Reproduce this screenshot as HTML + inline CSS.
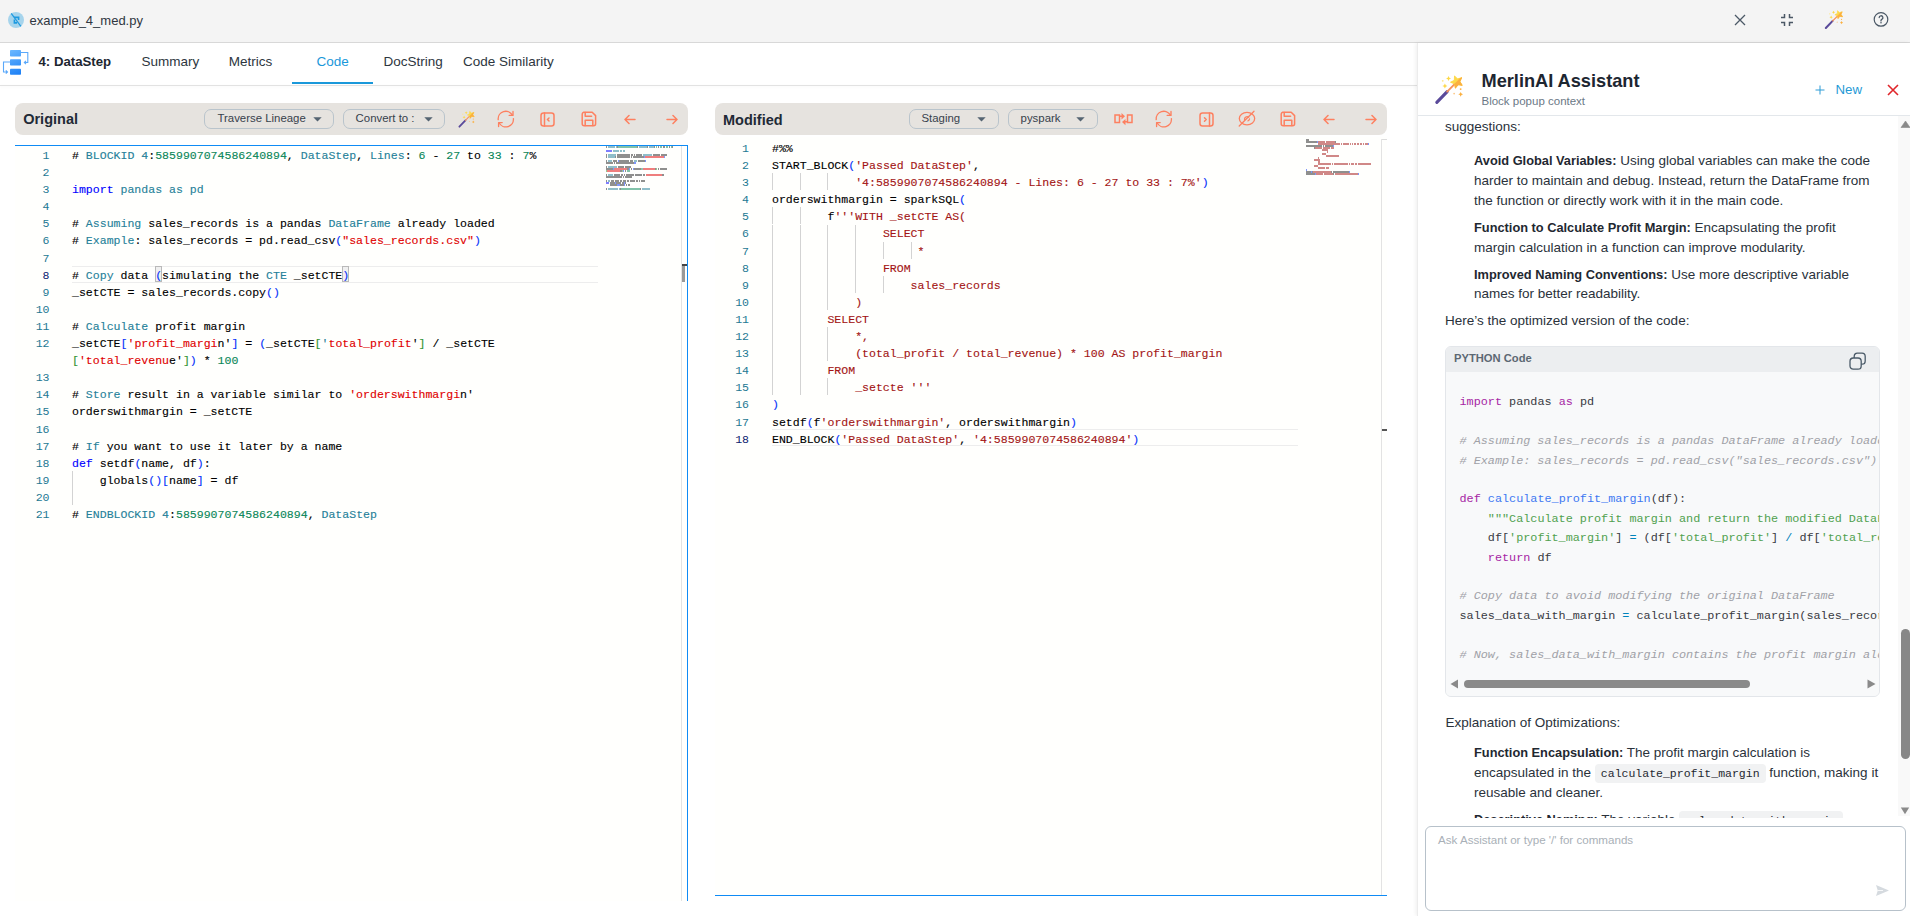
<!DOCTYPE html><html><head><meta charset="utf-8"><title>example_4_med.py</title><style>
html,body{margin:0;padding:0;}
body{width:1910px;height:916px;overflow:hidden;position:relative;background:#fff;font-family:"Liberation Sans",sans-serif;}
.code{position:absolute;padding-top:1px;-webkit-text-stroke:0.12px currentColor;font-family:"Liberation Mono",monospace;font-size:11.55px;line-height:17.1px;white-space:pre;color:#000;}
.code div{height:17.1px;}
.ln{position:absolute;padding-top:1px;font-family:"Liberation Mono",monospace;font-size:11.55px;line-height:17.1px;white-space:pre;color:#237893;text-align:right;}
.ln div{height:17.1px;}
.ln .act{color:#0b216f}
.t{color:#267f99}.n{color:#098658}.k{color:#0000ff}.s{color:#e00000}.sd{color:#a31515}.b1{color:#0431fa}.b2{color:#319331}.b3{color:#7b3814}
.chat{position:absolute;font-family:"Liberation Sans",sans-serif;font-size:13.5px;color:#2a323b;white-space:pre;}
.cb{position:absolute;font-family:"Liberation Mono",monospace;font-size:11.8px;line-height:19.4px;white-space:pre;color:#383a42;}
.cb div{height:19.4px}
.pk{color:#a626a4}.pf{color:#4078f2}.ps{color:#50a14f}.pc{color:#a0a1a7;font-style:italic}.po{color:#0184bc}
</style></head><body>
<div style="position:absolute;left:0px;top:0px;width:1910px;height:42px;background:#f4f4f4"></div>
<div style="position:absolute;left:0px;top:42px;width:1910px;height:1px;background:#d8d8d8"></div>
<svg style="position:absolute;left:8px;top:12px;" width="16" height="16" viewBox="0 0 16 16"><circle cx="8" cy="8" r="8" fill="#a6d4ec"/><path d="M3.2 1.3 L12.9 14.4" stroke="#1e9ae0" stroke-width="1.2"/><path d="M6 5.4 H10.6 V8" stroke="#1e9ae0" stroke-width="1.6" fill="none"/><path d="M6.4 7.6 V10.9 H9" stroke="#1e9ae0" stroke-width="1.6" fill="none"/></svg>
<div style="position:absolute;left:29.5px;top:11.79px;font:normal 13px/17px 'Liberation Sans', sans-serif;color:#2f3741;white-space:pre;">example_4_med.py</div>
<svg style="position:absolute;left:1734px;top:14px;" width="12" height="12" viewBox="0 0 12 12"><path d="M1 1L11 11M11 1L1 11" stroke="#4b5866" stroke-width="1.3" fill="none"/></svg>
<svg style="position:absolute;left:1780px;top:13px;" width="14" height="14" viewBox="0 0 14 14"><path d="M4.5 1v3.5H1M9.5 1v3.5H13M4.5 13V9.5H1M9.5 13V9.5H13" stroke="#4b5866" stroke-width="1.5" fill="none"/></svg>
<svg style="position:absolute;left:1822.13px;top:8.14px;" width="23.91" height="23.22" viewBox="0 0 23.91 23.22"><g transform="scale(0.6830)"><path d="M5.6 29.3 L15.6 18.9" stroke="#5a4a9a" stroke-width="3" stroke-linecap="round"/><path d="M15.6 18.9 L22.5 12" stroke="#f7935a" stroke-width="1.8" stroke-linecap="round"/><g transform="translate(24.9 9.5) rotate(-22)"><path d="M0 -6 L1.7 -2.3 L5.7 -1.9 L2.7 0.9 L3.5 4.9 L0 2.9 L-3.5 4.9 L-2.7 0.9 L-5.7 -1.9 L-1.7 -2.3 Z" fill="#fdd94a" stroke="#fdd94a" stroke-width="0.9" stroke-linejoin="round"/></g><clipPath id="cp1"><path d="M10 24 L32 2 L40 40 Z"/></clipPath><g clip-path="url(#cp1)"><g transform="translate(24.9 9.5) rotate(-22)"><path d="M0 -6 L1.7 -2.3 L5.7 -1.9 L2.7 0.9 L3.5 4.9 L0 2.9 L-3.5 4.9 L-2.7 0.9 L-5.7 -1.9 L-1.7 -2.3 Z" fill="#fbb040" stroke="#fbb040" stroke-width="0.9" stroke-linejoin="round"/></g></g><path d="M16.9 3.9 Q17.3 5.9 19.3 6.3 Q17.3 6.7 16.9 8.7 Q16.5 6.7 14.5 6.3 Q16.5 5.9 16.9 3.9Z" fill="#fdd94a"/><path d="M13.4 11 Q13.8 13.1 15.9 13.5 Q13.8 13.9 13.4 16 Q13 13.9 10.9 13.5 Q13 13.1 13.4 11Z" fill="#fdd94a"/><path d="M28.6 19.2 Q29 21.1 30.9 21.5 Q29 21.9 28.6 23.8 Q28.2 21.9 26.3 21.5 Q28.2 21.1 28.6 19.2Z" fill="#fbb040"/><circle cx="11.3" cy="8.5" r="0.9" fill="#fde68a"/><circle cx="28.6" cy="16.5" r="0.9" fill="#fbb040"/><circle cx="22.3" cy="20.8" r="0.9" fill="#fcc98a"/></g></svg>
<svg style="position:absolute;left:1873px;top:11px;" width="17" height="17" viewBox="0 0 17 17"><circle cx="8" cy="8.4" r="6.8" stroke="#4b5866" stroke-width="1.2" fill="none"/><path d="M6.2 6.6a1.85 1.85 0 1 1 2.6 1.7c-.6.3-.8.7-.8 1.3v.3" stroke="#4b5866" stroke-width="1.3" fill="none" stroke-linecap="round"/><circle cx="8" cy="11.7" r="0.8" fill="#4b5866"/></svg>
<div style="position:absolute;left:0px;top:85px;width:1418px;height:1px;background:#e2e2e2;box-shadow:0 1px 3px rgba(0,0,0,0.05)"></div>
<svg style="position:absolute;left:2px;top:48px;" width="28" height="29" viewBox="0 0 28 29"><defs><linearGradient id="g1" gradientUnits="userSpaceOnUse" x1="8" y1="2" x2="19" y2="27"><stop offset="0" stop-color="#6cb8ff"/><stop offset="1" stop-color="#1a7ef5"/></linearGradient></defs><rect x="8" y="2" width="11" height="6.5" rx="0.8" fill="url(#g1)"/><rect x="8" y="11.3" width="11" height="6.3" rx="0.8" fill="url(#g1)"/><rect x="8" y="20.8" width="11" height="6" rx="0.8" fill="url(#g1)"/><path d="M19 4.5 H25.8 V14.5 H22.5 M24 12.8 L22.3 14.5 L24 16.2" stroke="#5aa8fa" stroke-width="1.1" fill="none"/><path d="M8 14 H1.5 V24 H5 M3.8 22.3 L5.5 24 L3.8 25.7" stroke="#5aa8fa" stroke-width="1.1" fill="none"/></svg>
<div style="position:absolute;left:38.5px;top:53.02px;font:bold 13.2px/17px 'Liberation Sans', sans-serif;color:#1d2630;white-space:pre;">4: DataStep</div>
<div style="position:absolute;left:141.5px;top:53.22px;font:normal 13.5px/18px 'Liberation Sans', sans-serif;color:#2d3640;white-space:pre;">Summary</div>
<div style="position:absolute;left:228.8px;top:53.22px;font:normal 13.5px/18px 'Liberation Sans', sans-serif;color:#2d3640;white-space:pre;">Metrics</div>
<div style="position:absolute;left:316.5px;top:53.22px;font:normal 13.5px/18px 'Liberation Sans', sans-serif;color:#1a98da;white-space:pre;">Code</div>
<div style="position:absolute;left:383.5px;top:53.22px;font:normal 13.5px/18px 'Liberation Sans', sans-serif;color:#2d3640;white-space:pre;">DocString</div>
<div style="position:absolute;left:463px;top:53.22px;font:normal 13.5px/18px 'Liberation Sans', sans-serif;color:#2d3640;white-space:pre;">Code Similarity</div>
<div style="position:absolute;left:292px;top:82px;width:81px;height:2px;background:#1a98da"></div>
<div style="position:absolute;left:15px;top:103px;width:673px;height:32px;background:#e6e3df;border-radius:8px"></div>
<div style="position:absolute;left:23.2px;top:110.37px;font:bold 14.5px/19px 'Liberation Sans', sans-serif;color:#1f2a36;white-space:pre;">Original</div>
<div style="position:absolute;left:204px;top:109px;width:130px;height:20px;box-sizing:border-box;border:1px solid #b9c4cc;border-radius:7px"></div>
<div style="position:absolute;left:217.5px;top:111.25px;font:normal 11.4px/15px 'Liberation Sans', sans-serif;color:#36414c;white-space:pre;">Traverse Lineage</div>
<svg style="position:absolute;left:312.5px;top:117px;" width="9" height="5" viewBox="0 0 9 5"><path d="M0.3 0.2H8.7L4.5 4.6Z" fill="#556472"/></svg>
<div style="position:absolute;left:343px;top:109px;width:102px;height:20px;box-sizing:border-box;border:1px solid #b9c4cc;border-radius:7px"></div>
<div style="position:absolute;left:355.6px;top:111.25px;font:normal 11.4px/15px 'Liberation Sans', sans-serif;color:#36414c;white-space:pre;">Convert to :</div>
<svg style="position:absolute;left:423.5px;top:117px;" width="9" height="5" viewBox="0 0 9 5"><path d="M0.3 0.2H8.7L4.5 4.6Z" fill="#556472"/></svg>
<svg style="position:absolute;left:456.28px;top:108.55px;" width="21.13" height="20.53" viewBox="0 0 21.13 20.53"><g transform="scale(0.6038)"><path d="M5.6 29.3 L15.6 18.9" stroke="#5a4a9a" stroke-width="3" stroke-linecap="round"/><path d="M15.6 18.9 L22.5 12" stroke="#f7935a" stroke-width="1.8" stroke-linecap="round"/><g transform="translate(24.9 9.5) rotate(-22)"><path d="M0 -6 L1.7 -2.3 L5.7 -1.9 L2.7 0.9 L3.5 4.9 L0 2.9 L-3.5 4.9 L-2.7 0.9 L-5.7 -1.9 L-1.7 -2.3 Z" fill="#fdd94a" stroke="#fdd94a" stroke-width="0.9" stroke-linejoin="round"/></g><clipPath id="cp2"><path d="M10 24 L32 2 L40 40 Z"/></clipPath><g clip-path="url(#cp2)"><g transform="translate(24.9 9.5) rotate(-22)"><path d="M0 -6 L1.7 -2.3 L5.7 -1.9 L2.7 0.9 L3.5 4.9 L0 2.9 L-3.5 4.9 L-2.7 0.9 L-5.7 -1.9 L-1.7 -2.3 Z" fill="#fbb040" stroke="#fbb040" stroke-width="0.9" stroke-linejoin="round"/></g></g><path d="M16.9 3.9 Q17.3 5.9 19.3 6.3 Q17.3 6.7 16.9 8.7 Q16.5 6.7 14.5 6.3 Q16.5 5.9 16.9 3.9Z" fill="#fdd94a"/><path d="M13.4 11 Q13.8 13.1 15.9 13.5 Q13.8 13.9 13.4 16 Q13 13.9 10.9 13.5 Q13 13.1 13.4 11Z" fill="#fdd94a"/><path d="M28.6 19.2 Q29 21.1 30.9 21.5 Q29 21.9 28.6 23.8 Q28.2 21.9 26.3 21.5 Q28.2 21.1 28.6 19.2Z" fill="#fbb040"/><circle cx="11.3" cy="8.5" r="0.9" fill="#fde68a"/><circle cx="28.6" cy="16.5" r="0.9" fill="#fbb040"/><circle cx="22.3" cy="20.8" r="0.9" fill="#fcc98a"/></g></svg>
<svg style="position:absolute;left:497px;top:110px;" width="18" height="18" viewBox="0 0 18 18"><g fill="none" stroke="#fd8060" stroke-width="1.35" stroke-linecap="round" stroke-linejoin="round"><path d="M1.2 9.6 A7.6 7.6 0 0 1 15.4 5.2"/><path d="M16 1.4 V5.4 H12.2"/><path d="M16.4 8.6 A7.6 7.6 0 0 1 2.2 13"/><path d="M1.6 16.6 V12.6 H5.2"/></g></svg>
<svg style="position:absolute;left:539.5px;top:111.5px;" width="15" height="15" viewBox="0 0 15 15"><g fill="none" stroke="#fd8060" stroke-width="1.5" stroke-linecap="round" stroke-linejoin="round"><rect x="1" y="1" width="13" height="13" rx="2.5"/><path d="M4.5 1v13"/><path d="M9 6l-1.6 1.5L9 9"/></g></svg>
<svg style="position:absolute;left:581.2px;top:111.2px;" width="16" height="16" viewBox="0 0 16 16"><g fill="none" stroke="#fd8060" stroke-width="1.5" stroke-linecap="round" stroke-linejoin="round"><path d="M2.5 1.2H11.2L14.6 4.6V12.8A2 2 0 0 1 12.6 14.8H3.2A2 2 0 0 1 1.2 12.8V3.2A2 2 0 0 1 3.2 1.2Z"/><path d="M4.2 1.5V5.2H10.6"/><path d="M4.2 14.6V9.2H11.8V14.6"/></g></svg>
<svg style="position:absolute;left:623.8px;top:113.8px;" width="12" height="11" viewBox="0 0 12 11"><g fill="none" stroke="#fd8060" stroke-width="1.5" stroke-linecap="round" stroke-linejoin="round"><path d="M1 5.5H11M1 5.5L5 1.5M1 5.5L5 9.5"/></g></svg>
<svg style="position:absolute;left:665.5px;top:113.8px;" width="12" height="11" viewBox="0 0 12 11"><g fill="none" stroke="#fd8060" stroke-width="1.5" stroke-linecap="round" stroke-linejoin="round"><path d="M1 5.5H11M11 5.5L7 1.5M11 5.5L7 9.5"/></g></svg>
<div style="position:absolute;left:715px;top:103px;width:672px;height:32px;background:#e6e3df;border-radius:8px"></div>
<div style="position:absolute;left:723px;top:111.07px;font:bold 14.5px/19px 'Liberation Sans', sans-serif;color:#1f2a36;white-space:pre;">Modified</div>
<div style="position:absolute;left:909px;top:109px;width:90px;height:20px;box-sizing:border-box;border:1px solid #b9c4cc;border-radius:7px"></div>
<div style="position:absolute;left:921.5px;top:111.25px;font:normal 11.4px/15px 'Liberation Sans', sans-serif;color:#36414c;white-space:pre;">Staging</div>
<svg style="position:absolute;left:977.2px;top:117px;" width="9" height="5" viewBox="0 0 9 5"><path d="M0.3 0.2H8.7L4.5 4.6Z" fill="#556472"/></svg>
<div style="position:absolute;left:1008px;top:109px;width:90px;height:20px;box-sizing:border-box;border:1px solid #b9c4cc;border-radius:7px"></div>
<div style="position:absolute;left:1020.6px;top:111.25px;font:normal 11.4px/15px 'Liberation Sans', sans-serif;color:#36414c;white-space:pre;">pyspark</div>
<svg style="position:absolute;left:1076.2px;top:117px;" width="9" height="5" viewBox="0 0 9 5"><path d="M0.3 0.2H8.7L4.5 4.6Z" fill="#556472"/></svg>
<svg style="position:absolute;left:1113.5px;top:110.8px;" width="20" height="16" viewBox="0 0 20 16"><g fill="none" stroke="#fd8060" stroke-width="1.5"><rect x="1" y="4" width="4.5" height="7.5"/><rect x="13.5" y="4" width="4.5" height="7.5"/></g><g fill="#fd8060"><path d="M5.5 4.5H8V6H5.5Z"/><path d="M7.5 2L11 5.2L7.5 8.5Z"/><path d="M13.5 10H11V11.5H13.5Z"/><path d="M11.5 8L8 11L11.5 14.2Z"/></g></svg>
<svg style="position:absolute;left:1155px;top:110px;" width="18" height="18" viewBox="0 0 18 18"><g fill="none" stroke="#fd8060" stroke-width="1.35" stroke-linecap="round" stroke-linejoin="round"><path d="M1.2 9.6 A7.6 7.6 0 0 1 15.4 5.2"/><path d="M16 1.4 V5.4 H12.2"/><path d="M16.4 8.6 A7.6 7.6 0 0 1 2.2 13"/><path d="M1.6 16.6 V12.6 H5.2"/></g></svg>
<svg style="position:absolute;left:1198.5px;top:111.5px;" width="15" height="15" viewBox="0 0 15 15"><g fill="none" stroke="#fd8060" stroke-width="1.5" stroke-linecap="round" stroke-linejoin="round"><rect x="1" y="1" width="13" height="13" rx="2.5"/><path d="M10.5 1v13"/><path d="M5.5 5.8l1.7 1.7L5.5 9.2"/></g></svg>
<svg style="position:absolute;left:1238px;top:109.8px;" width="18" height="17" viewBox="0 0 18 17"><g fill="none" stroke="#fd8060" stroke-width="1.3" stroke-linecap="round"><ellipse cx="9" cy="8.6" rx="7.7" ry="6.2"/><path d="M6.5 9.5a2.6 2.6 0 0 1 4.2 -2.3"/><path d="M11.5 9a2 2 0 0 1 -1.5 1.8"/><path d="M1.2 16L16 1.2"/></g></svg>
<svg style="position:absolute;left:1279.8px;top:111.2px;" width="16" height="16" viewBox="0 0 16 16"><g fill="none" stroke="#fd8060" stroke-width="1.5" stroke-linecap="round" stroke-linejoin="round"><path d="M2.5 1.2H11.2L14.6 4.6V12.8A2 2 0 0 1 12.6 14.8H3.2A2 2 0 0 1 1.2 12.8V3.2A2 2 0 0 1 3.2 1.2Z"/><path d="M4.2 1.5V5.2H10.6"/><path d="M4.2 14.6V9.2H11.8V14.6"/></g></svg>
<svg style="position:absolute;left:1322.8px;top:113.8px;" width="12" height="11" viewBox="0 0 12 11"><g fill="none" stroke="#fd8060" stroke-width="1.5" stroke-linecap="round" stroke-linejoin="round"><path d="M1 5.5H11M1 5.5L5 1.5M1 5.5L5 9.5"/></g></svg>
<svg style="position:absolute;left:1365.2px;top:113.8px;" width="12" height="11" viewBox="0 0 12 11"><g fill="none" stroke="#fd8060" stroke-width="1.5" stroke-linecap="round" stroke-linejoin="round"><path d="M1 5.5H11M11 5.5L7 1.5M11 5.5L7 9.5"/></g></svg>
<div style="position:absolute;left:15px;top:145px;width:672px;height:756px;background:#fffffd"></div>
<div style="position:absolute;left:15px;top:145px;width:673px;height:1px;background:#0f8bf5"></div>
<div style="position:absolute;left:687px;top:145px;width:1px;height:756px;background:#0f8bf5"></div>
<div style="position:absolute;left:681px;top:146px;width:1px;height:755px;background:#e3e3e3"></div>
<div style="position:absolute;left:72px;top:265.8px;width:526px;height:17.2px;box-sizing:border-box;border-top:1.5px solid #ededed;border-bottom:1.5px solid #ededed"></div>
<div style="position:absolute;left:155.16px;top:266.3px;width:7px;height:16px;box-sizing:border-box;border:1px solid #b9b9b9;background:#f0f0f0"></div>
<div style="position:absolute;left:342.27px;top:266.3px;width:7px;height:16px;box-sizing:border-box;border:1px solid #b9b9b9;background:#f0f0f0"></div>
<div style="position:absolute;left:682px;top:264px;width:5px;height:2px;background:#444"></div>
<div style="position:absolute;left:682px;top:266px;width:3px;height:16px;background:#999"></div>
<div style="position:absolute;left:72px;top:470.9px;width:1px;height:17.1px;background:#d3d3d3"></div>
<div style="position:absolute;left:72px;top:488.0px;width:1px;height:17.1px;background:#d3d3d3"></div>
<div class="ln" style="left:20px;top:146px;width:29.5px"><div>1</div><div>2</div><div>3</div><div>4</div><div>5</div><div>6</div><div>7</div><div class="act">8</div><div>9</div><div>10</div><div>11</div><div>12</div><div></div><div>13</div><div>14</div><div>15</div><div>16</div><div>17</div><div>18</div><div>19</div><div>20</div><div>21</div></div>
<div class="code" style="left:72px;top:146px"><div># <span class="t">BLOCKID</span> <span class="t">4</span>:<span class="n">5859907074586240894</span>, <span class="t">DataStep</span>, <span class="t">Lines</span>: <span class="n">6</span> - <span class="n">27</span> to <span class="n">33</span> : <span class="n">7</span>%</div><div></div><div><span class="k">import</span> <span class="t">pandas as pd</span></div><div></div><div># <span class="t">Assuming</span> sales_records is a pandas <span class="t">DataFrame</span> already loaded</div><div># <span class="t">Example</span>: sales_records = pd.read_csv<span class="b1">(</span><span class="s">&quot;sales_records.csv&quot;</span><span class="b1">)</span></div><div></div><div># <span class="t">Copy</span> data <span class="b1">(</span>simulating the <span class="t">CTE</span> _setCTE<span class="b1">)</span></div><div>_setCTE = sales_records.copy<span class="b1">()</span></div><div></div><div># <span class="t">Calculate</span> profit margin</div><div>_setCTE<span class="b1">[</span><span class="s">&#x27;profit_margi</span>n&#x27;<span class="b1">]</span> = <span class="b1">(</span>_setCTE<span class="b2">[</span><span class="t">&#x27;</span><span class="s">total_profit</span>&#x27;<span class="b2">]</span> / _setCTE</div><div><span class="b2">[</span><span class="s">&#x27;total_revenu</span>e&#x27;<span class="b2">]</span><span class="b1">)</span> * <span class="n">100</span></div><div></div><div># <span class="t">Store</span> result in a variable similar to <span class="s">&#x27;orderswithmargi</span>n&#x27;</div><div>orderswithmargin = _setCTE</div><div></div><div># <span class="t">If</span> you want to use it later by a name</div><div><span class="k">def</span> setdf<span class="b1">(</span>name, df<span class="b1">)</span>:</div><div>    globals<span class="b1">()</span><span class="b1">[</span>name<span class="b1">]</span> = df</div><div></div><div># <span class="t">ENDBLOCKID</span> <span class="t">4</span>:<span class="n">5859907074586240894</span>, <span class="t">DataStep</span></div></div>
<div style="position:absolute;left:715px;top:137px;width:672px;height:758px;background:#fffffd"></div>
<div style="position:absolute;left:715px;top:895px;width:672px;height:1px;background:#0f8bf5"></div>
<div style="position:absolute;left:1381px;top:139px;width:1px;height:756px;background:#e3e3e3"></div>
<div style="position:absolute;left:772px;top:429.3px;width:526px;height:17.2px;box-sizing:border-box;border-top:1.5px solid #ededed;border-bottom:1.5px solid #ededed"></div>
<div style="position:absolute;left:1382px;top:429px;width:5px;height:2px;background:#555"></div>
<div style="position:absolute;left:1382px;top:139px;width:5px;height:1px;background:#dcdcdc"></div>
<div style="position:absolute;left:772px;top:173.2px;width:1px;height:17.1px;background:#d3d3d3"></div>
<div style="position:absolute;left:800px;top:173.2px;width:1px;height:17.1px;background:#d3d3d3"></div>
<div style="position:absolute;left:827px;top:173.2px;width:1px;height:17.1px;background:#d3d3d3"></div>
<div style="position:absolute;left:772px;top:207.4px;width:1px;height:17.1px;background:#d3d3d3"></div>
<div style="position:absolute;left:800px;top:207.4px;width:1px;height:17.1px;background:#d3d3d3"></div>
<div style="position:absolute;left:772px;top:224.5px;width:1px;height:17.1px;background:#d3d3d3"></div>
<div style="position:absolute;left:800px;top:224.5px;width:1px;height:17.1px;background:#d3d3d3"></div>
<div style="position:absolute;left:827px;top:224.5px;width:1px;height:17.1px;background:#d3d3d3"></div>
<div style="position:absolute;left:855px;top:224.5px;width:1px;height:17.1px;background:#d3d3d3"></div>
<div style="position:absolute;left:772px;top:241.6px;width:1px;height:17.1px;background:#d3d3d3"></div>
<div style="position:absolute;left:800px;top:241.6px;width:1px;height:17.1px;background:#d3d3d3"></div>
<div style="position:absolute;left:827px;top:241.6px;width:1px;height:17.1px;background:#d3d3d3"></div>
<div style="position:absolute;left:855px;top:241.6px;width:1px;height:17.1px;background:#d3d3d3"></div>
<div style="position:absolute;left:883px;top:241.6px;width:1px;height:17.1px;background:#d3d3d3"></div>
<div style="position:absolute;left:911px;top:241.6px;width:1px;height:17.1px;background:#d3d3d3"></div>
<div style="position:absolute;left:772px;top:258.7px;width:1px;height:17.1px;background:#d3d3d3"></div>
<div style="position:absolute;left:800px;top:258.7px;width:1px;height:17.1px;background:#d3d3d3"></div>
<div style="position:absolute;left:827px;top:258.7px;width:1px;height:17.1px;background:#d3d3d3"></div>
<div style="position:absolute;left:855px;top:258.7px;width:1px;height:17.1px;background:#d3d3d3"></div>
<div style="position:absolute;left:772px;top:275.8px;width:1px;height:17.1px;background:#d3d3d3"></div>
<div style="position:absolute;left:800px;top:275.8px;width:1px;height:17.1px;background:#d3d3d3"></div>
<div style="position:absolute;left:827px;top:275.8px;width:1px;height:17.1px;background:#d3d3d3"></div>
<div style="position:absolute;left:855px;top:275.8px;width:1px;height:17.1px;background:#d3d3d3"></div>
<div style="position:absolute;left:883px;top:275.8px;width:1px;height:17.1px;background:#d3d3d3"></div>
<div style="position:absolute;left:772px;top:292.9px;width:1px;height:17.1px;background:#d3d3d3"></div>
<div style="position:absolute;left:800px;top:292.9px;width:1px;height:17.1px;background:#d3d3d3"></div>
<div style="position:absolute;left:827px;top:292.9px;width:1px;height:17.1px;background:#d3d3d3"></div>
<div style="position:absolute;left:772px;top:310.0px;width:1px;height:17.1px;background:#d3d3d3"></div>
<div style="position:absolute;left:800px;top:310.0px;width:1px;height:17.1px;background:#d3d3d3"></div>
<div style="position:absolute;left:772px;top:327.1px;width:1px;height:17.1px;background:#d3d3d3"></div>
<div style="position:absolute;left:800px;top:327.1px;width:1px;height:17.1px;background:#d3d3d3"></div>
<div style="position:absolute;left:827px;top:327.1px;width:1px;height:17.1px;background:#d3d3d3"></div>
<div style="position:absolute;left:772px;top:344.2px;width:1px;height:17.1px;background:#d3d3d3"></div>
<div style="position:absolute;left:800px;top:344.2px;width:1px;height:17.1px;background:#d3d3d3"></div>
<div style="position:absolute;left:827px;top:344.2px;width:1px;height:17.1px;background:#d3d3d3"></div>
<div style="position:absolute;left:772px;top:361.3px;width:1px;height:17.1px;background:#d3d3d3"></div>
<div style="position:absolute;left:800px;top:361.3px;width:1px;height:17.1px;background:#d3d3d3"></div>
<div style="position:absolute;left:772px;top:378.4px;width:1px;height:17.1px;background:#d3d3d3"></div>
<div style="position:absolute;left:800px;top:378.4px;width:1px;height:17.1px;background:#d3d3d3"></div>
<div style="position:absolute;left:827px;top:378.4px;width:1px;height:17.1px;background:#d3d3d3"></div>
<div class="ln" style="left:720px;top:139px;width:29px"><div>1</div><div>2</div><div>3</div><div>4</div><div>5</div><div>6</div><div>7</div><div>8</div><div>9</div><div>10</div><div>11</div><div>12</div><div>13</div><div>14</div><div>15</div><div>16</div><div>17</div><div class="act">18</div></div>
<div class="code" style="left:772px;top:139px"><div>#%%</div><div>START_BLOCK<span class="b1">(</span><span class="sd">&#x27;Passed DataStep&#x27;</span>,</div><div>            <span class="sd">&#x27;4:5859907074586240894 - Lines: 6 - 27 to 33 : 7%&#x27;</span><span class="b1">)</span></div><div>orderswithmargin = sparkSQL<span class="b1">(</span></div><div>        f<span class="sd">&#x27;&#x27;&#x27;WITH _setCTE AS(</span></div><div>                <span class="sd">SELECT</span></div><div>                     <span class="sd">*</span></div><div>                <span class="sd">FROM</span></div><div>                    <span class="sd">sales_records</span></div><div>            <span class="sd">)</span></div><div>        <span class="sd">SELECT</span></div><div>            <span class="sd">*,</span></div><div>            <span class="sd">(total_profit / total_revenue) * 100 AS profit_margin</span></div><div>        <span class="sd">FROM</span></div><div>            <span class="sd">_setcte &#x27;&#x27;&#x27;</span></div><div><span class="b1">)</span></div><div>setdf<span class="b1">(</span>f<span class="sd">&#x27;orderswithmargin&#x27;</span>, orderswithmargin<span class="b1">)</span></div><div>END_BLOCK<span class="b1">(</span><span class="sd">&#x27;Passed DataStep&#x27;</span>, <span class="sd">&#x27;4:5859907074586240894&#x27;</span><span class="b1">)</span></div></div>
<svg style="position:absolute;left:606px;top:145.5px;" width="90" height="50" viewBox="0 0 90 50"><rect x="0.00" y="0.30" width="1.00" height="1.40" fill="#222" opacity="0.72"/><rect x="2.00" y="0.30" width="7.00" height="1.40" fill="#267f99" opacity="0.72"/><rect x="10.00" y="0.30" width="1.00" height="1.40" fill="#267f99" opacity="0.72"/><rect x="11.00" y="0.30" width="1.00" height="1.40" fill="#222" opacity="0.72"/><rect x="12.00" y="0.30" width="19.00" height="1.40" fill="#098658" opacity="0.72"/><rect x="31.00" y="0.30" width="1.00" height="1.40" fill="#222" opacity="0.72"/><rect x="33.00" y="0.30" width="8.00" height="1.40" fill="#267f99" opacity="0.72"/><rect x="41.00" y="0.30" width="1.00" height="1.40" fill="#222" opacity="0.72"/><rect x="43.00" y="0.30" width="5.00" height="1.40" fill="#267f99" opacity="0.72"/><rect x="48.00" y="0.30" width="1.00" height="1.40" fill="#222" opacity="0.72"/><rect x="50.00" y="0.30" width="1.00" height="1.40" fill="#098658" opacity="0.72"/><rect x="52.00" y="0.30" width="1.00" height="1.40" fill="#222" opacity="0.72"/><rect x="54.00" y="0.30" width="2.00" height="1.40" fill="#098658" opacity="0.72"/><rect x="57.00" y="0.30" width="2.00" height="1.40" fill="#222" opacity="0.72"/><rect x="60.00" y="0.30" width="2.00" height="1.40" fill="#098658" opacity="0.72"/><rect x="63.00" y="0.30" width="1.00" height="1.40" fill="#222" opacity="0.72"/><rect x="65.00" y="0.30" width="1.00" height="1.40" fill="#098658" opacity="0.72"/><rect x="66.00" y="0.30" width="1.00" height="1.40" fill="#222" opacity="0.72"/><rect x="0.00" y="4.30" width="6.00" height="1.40" fill="#0000ff" opacity="0.72"/><rect x="7.00" y="4.30" width="6.00" height="1.40" fill="#267f99" opacity="0.72"/><rect x="14.00" y="4.30" width="2.00" height="1.40" fill="#267f99" opacity="0.72"/><rect x="17.00" y="4.30" width="2.00" height="1.40" fill="#267f99" opacity="0.72"/><rect x="0.00" y="8.30" width="1.00" height="1.40" fill="#222" opacity="0.72"/><rect x="2.00" y="8.30" width="8.00" height="1.40" fill="#267f99" opacity="0.72"/><rect x="11.00" y="8.30" width="13.00" height="1.40" fill="#222" opacity="0.72"/><rect x="25.00" y="8.30" width="2.00" height="1.40" fill="#222" opacity="0.72"/><rect x="28.00" y="8.30" width="1.00" height="1.40" fill="#222" opacity="0.72"/><rect x="30.00" y="8.30" width="6.00" height="1.40" fill="#222" opacity="0.72"/><rect x="37.00" y="8.30" width="9.00" height="1.40" fill="#267f99" opacity="0.72"/><rect x="47.00" y="8.30" width="7.00" height="1.40" fill="#222" opacity="0.72"/><rect x="55.00" y="8.30" width="6.00" height="1.40" fill="#222" opacity="0.72"/><rect x="0.00" y="10.30" width="1.00" height="1.40" fill="#222" opacity="0.72"/><rect x="2.00" y="10.30" width="7.00" height="1.40" fill="#267f99" opacity="0.72"/><rect x="9.00" y="10.30" width="1.00" height="1.40" fill="#222" opacity="0.72"/><rect x="11.00" y="10.30" width="13.00" height="1.40" fill="#222" opacity="0.72"/><rect x="25.00" y="10.30" width="1.00" height="1.40" fill="#222" opacity="0.72"/><rect x="27.00" y="10.30" width="11.00" height="1.40" fill="#222" opacity="0.72"/><rect x="38.00" y="10.30" width="1.00" height="1.40" fill="#0431fa" opacity="0.72"/><rect x="39.00" y="10.30" width="19.00" height="1.40" fill="#e00000" opacity="0.72"/><rect x="58.00" y="10.30" width="1.00" height="1.40" fill="#0431fa" opacity="0.72"/><rect x="0.00" y="14.30" width="1.00" height="1.40" fill="#222" opacity="0.72"/><rect x="2.00" y="14.30" width="4.00" height="1.40" fill="#267f99" opacity="0.72"/><rect x="7.00" y="14.30" width="4.00" height="1.40" fill="#222" opacity="0.72"/><rect x="12.00" y="14.30" width="1.00" height="1.40" fill="#0431fa" opacity="0.72"/><rect x="13.00" y="14.30" width="10.00" height="1.40" fill="#222" opacity="0.72"/><rect x="24.00" y="14.30" width="3.00" height="1.40" fill="#222" opacity="0.72"/><rect x="28.00" y="14.30" width="3.00" height="1.40" fill="#267f99" opacity="0.72"/><rect x="32.00" y="14.30" width="7.00" height="1.40" fill="#222" opacity="0.72"/><rect x="39.00" y="14.30" width="1.00" height="1.40" fill="#0431fa" opacity="0.72"/><rect x="0.00" y="16.30" width="7.00" height="1.40" fill="#222" opacity="0.72"/><rect x="8.00" y="16.30" width="1.00" height="1.40" fill="#222" opacity="0.72"/><rect x="10.00" y="16.30" width="18.00" height="1.40" fill="#222" opacity="0.72"/><rect x="28.00" y="16.30" width="2.00" height="1.40" fill="#0431fa" opacity="0.72"/><rect x="0.00" y="20.30" width="1.00" height="1.40" fill="#222" opacity="0.72"/><rect x="2.00" y="20.30" width="9.00" height="1.40" fill="#267f99" opacity="0.72"/><rect x="12.00" y="20.30" width="6.00" height="1.40" fill="#222" opacity="0.72"/><rect x="19.00" y="20.30" width="6.00" height="1.40" fill="#222" opacity="0.72"/><rect x="0.00" y="22.30" width="7.00" height="1.40" fill="#222" opacity="0.72"/><rect x="7.00" y="22.30" width="1.00" height="1.40" fill="#0431fa" opacity="0.72"/><rect x="8.00" y="22.30" width="13.00" height="1.40" fill="#e00000" opacity="0.72"/><rect x="21.00" y="22.30" width="2.00" height="1.40" fill="#222" opacity="0.72"/><rect x="23.00" y="22.30" width="1.00" height="1.40" fill="#0431fa" opacity="0.72"/><rect x="25.00" y="22.30" width="1.00" height="1.40" fill="#222" opacity="0.72"/><rect x="27.00" y="22.30" width="1.00" height="1.40" fill="#0431fa" opacity="0.72"/><rect x="28.00" y="22.30" width="7.00" height="1.40" fill="#222" opacity="0.72"/><rect x="35.00" y="22.30" width="1.00" height="1.40" fill="#319331" opacity="0.72"/><rect x="36.00" y="22.30" width="1.00" height="1.40" fill="#267f99" opacity="0.72"/><rect x="37.00" y="22.30" width="12.00" height="1.40" fill="#e00000" opacity="0.72"/><rect x="49.00" y="22.30" width="1.00" height="1.40" fill="#222" opacity="0.72"/><rect x="50.00" y="22.30" width="1.00" height="1.40" fill="#319331" opacity="0.72"/><rect x="52.00" y="22.30" width="1.00" height="1.40" fill="#222" opacity="0.72"/><rect x="54.00" y="22.30" width="7.00" height="1.40" fill="#222" opacity="0.72"/><rect x="0.00" y="24.30" width="1.00" height="1.40" fill="#319331" opacity="0.72"/><rect x="1.00" y="24.30" width="13.00" height="1.40" fill="#e00000" opacity="0.72"/><rect x="14.00" y="24.30" width="2.00" height="1.40" fill="#222" opacity="0.72"/><rect x="16.00" y="24.30" width="1.00" height="1.40" fill="#319331" opacity="0.72"/><rect x="17.00" y="24.30" width="1.00" height="1.40" fill="#0431fa" opacity="0.72"/><rect x="19.00" y="24.30" width="1.00" height="1.40" fill="#222" opacity="0.72"/><rect x="21.00" y="24.30" width="3.00" height="1.40" fill="#098658" opacity="0.72"/><rect x="0.00" y="28.30" width="1.00" height="1.40" fill="#222" opacity="0.72"/><rect x="2.00" y="28.30" width="5.00" height="1.40" fill="#267f99" opacity="0.72"/><rect x="8.00" y="28.30" width="6.00" height="1.40" fill="#222" opacity="0.72"/><rect x="15.00" y="28.30" width="2.00" height="1.40" fill="#222" opacity="0.72"/><rect x="18.00" y="28.30" width="1.00" height="1.40" fill="#222" opacity="0.72"/><rect x="20.00" y="28.30" width="8.00" height="1.40" fill="#222" opacity="0.72"/><rect x="29.00" y="28.30" width="7.00" height="1.40" fill="#222" opacity="0.72"/><rect x="37.00" y="28.30" width="2.00" height="1.40" fill="#222" opacity="0.72"/><rect x="40.00" y="28.30" width="16.00" height="1.40" fill="#e00000" opacity="0.72"/><rect x="56.00" y="28.30" width="2.00" height="1.40" fill="#222" opacity="0.72"/><rect x="0.00" y="30.30" width="16.00" height="1.40" fill="#222" opacity="0.72"/><rect x="17.00" y="30.30" width="1.00" height="1.40" fill="#222" opacity="0.72"/><rect x="19.00" y="30.30" width="7.00" height="1.40" fill="#222" opacity="0.72"/><rect x="0.00" y="34.30" width="1.00" height="1.40" fill="#222" opacity="0.72"/><rect x="2.00" y="34.30" width="2.00" height="1.40" fill="#267f99" opacity="0.72"/><rect x="5.00" y="34.30" width="3.00" height="1.40" fill="#222" opacity="0.72"/><rect x="9.00" y="34.30" width="4.00" height="1.40" fill="#222" opacity="0.72"/><rect x="14.00" y="34.30" width="2.00" height="1.40" fill="#222" opacity="0.72"/><rect x="17.00" y="34.30" width="3.00" height="1.40" fill="#222" opacity="0.72"/><rect x="21.00" y="34.30" width="2.00" height="1.40" fill="#222" opacity="0.72"/><rect x="24.00" y="34.30" width="5.00" height="1.40" fill="#222" opacity="0.72"/><rect x="30.00" y="34.30" width="2.00" height="1.40" fill="#222" opacity="0.72"/><rect x="33.00" y="34.30" width="1.00" height="1.40" fill="#222" opacity="0.72"/><rect x="35.00" y="34.30" width="4.00" height="1.40" fill="#222" opacity="0.72"/><rect x="0.00" y="36.30" width="3.00" height="1.40" fill="#0000ff" opacity="0.72"/><rect x="4.00" y="36.30" width="5.00" height="1.40" fill="#222" opacity="0.72"/><rect x="9.00" y="36.30" width="1.00" height="1.40" fill="#0431fa" opacity="0.72"/><rect x="10.00" y="36.30" width="5.00" height="1.40" fill="#222" opacity="0.72"/><rect x="16.00" y="36.30" width="2.00" height="1.40" fill="#222" opacity="0.72"/><rect x="18.00" y="36.30" width="1.00" height="1.40" fill="#0431fa" opacity="0.72"/><rect x="19.00" y="36.30" width="1.00" height="1.40" fill="#222" opacity="0.72"/><rect x="4.00" y="38.30" width="7.00" height="1.40" fill="#222" opacity="0.72"/><rect x="11.00" y="38.30" width="2.00" height="1.40" fill="#0431fa" opacity="0.72"/><rect x="13.00" y="38.30" width="1.00" height="1.40" fill="#0431fa" opacity="0.72"/><rect x="14.00" y="38.30" width="4.00" height="1.40" fill="#222" opacity="0.72"/><rect x="18.00" y="38.30" width="1.00" height="1.40" fill="#0431fa" opacity="0.72"/><rect x="20.00" y="38.30" width="1.00" height="1.40" fill="#222" opacity="0.72"/><rect x="22.00" y="38.30" width="2.00" height="1.40" fill="#222" opacity="0.72"/><rect x="0.00" y="42.30" width="1.00" height="1.40" fill="#222" opacity="0.72"/><rect x="2.00" y="42.30" width="10.00" height="1.40" fill="#267f99" opacity="0.72"/><rect x="13.00" y="42.30" width="1.00" height="1.40" fill="#267f99" opacity="0.72"/><rect x="14.00" y="42.30" width="1.00" height="1.40" fill="#222" opacity="0.72"/><rect x="15.00" y="42.30" width="19.00" height="1.40" fill="#098658" opacity="0.72"/><rect x="34.00" y="42.30" width="1.00" height="1.40" fill="#222" opacity="0.72"/><rect x="36.00" y="42.30" width="8.00" height="1.40" fill="#267f99" opacity="0.72"/></svg>
<svg style="position:absolute;left:1306px;top:139px;" width="90" height="50" viewBox="0 0 90 50"><rect x="0.00" y="0.30" width="3.00" height="1.40" fill="#222" opacity="0.72"/><rect x="0.00" y="2.30" width="11.00" height="1.40" fill="#222" opacity="0.72"/><rect x="11.00" y="2.30" width="1.00" height="1.40" fill="#0431fa" opacity="0.72"/><rect x="12.00" y="2.30" width="7.00" height="1.40" fill="#a31515" opacity="0.72"/><rect x="20.00" y="2.30" width="9.00" height="1.40" fill="#a31515" opacity="0.72"/><rect x="29.00" y="2.30" width="1.00" height="1.40" fill="#222" opacity="0.72"/><rect x="12.00" y="4.30" width="22.00" height="1.40" fill="#a31515" opacity="0.72"/><rect x="35.00" y="4.30" width="1.00" height="1.40" fill="#a31515" opacity="0.72"/><rect x="37.00" y="4.30" width="6.00" height="1.40" fill="#a31515" opacity="0.72"/><rect x="44.00" y="4.30" width="1.00" height="1.40" fill="#a31515" opacity="0.72"/><rect x="46.00" y="4.30" width="1.00" height="1.40" fill="#a31515" opacity="0.72"/><rect x="48.00" y="4.30" width="2.00" height="1.40" fill="#a31515" opacity="0.72"/><rect x="51.00" y="4.30" width="2.00" height="1.40" fill="#a31515" opacity="0.72"/><rect x="54.00" y="4.30" width="2.00" height="1.40" fill="#a31515" opacity="0.72"/><rect x="57.00" y="4.30" width="1.00" height="1.40" fill="#a31515" opacity="0.72"/><rect x="59.00" y="4.30" width="3.00" height="1.40" fill="#a31515" opacity="0.72"/><rect x="62.00" y="4.30" width="1.00" height="1.40" fill="#0431fa" opacity="0.72"/><rect x="0.00" y="6.30" width="16.00" height="1.40" fill="#222" opacity="0.72"/><rect x="17.00" y="6.30" width="1.00" height="1.40" fill="#222" opacity="0.72"/><rect x="19.00" y="6.30" width="8.00" height="1.40" fill="#222" opacity="0.72"/><rect x="27.00" y="6.30" width="1.00" height="1.40" fill="#0431fa" opacity="0.72"/><rect x="8.00" y="8.30" width="1.00" height="1.40" fill="#222" opacity="0.72"/><rect x="9.00" y="8.30" width="7.00" height="1.40" fill="#a31515" opacity="0.72"/><rect x="17.00" y="8.30" width="7.00" height="1.40" fill="#a31515" opacity="0.72"/><rect x="25.00" y="8.30" width="3.00" height="1.40" fill="#a31515" opacity="0.72"/><rect x="16.00" y="10.30" width="6.00" height="1.40" fill="#a31515" opacity="0.72"/><rect x="21.00" y="12.30" width="1.00" height="1.40" fill="#a31515" opacity="0.72"/><rect x="16.00" y="14.30" width="4.00" height="1.40" fill="#a31515" opacity="0.72"/><rect x="20.00" y="16.30" width="13.00" height="1.40" fill="#a31515" opacity="0.72"/><rect x="12.00" y="18.30" width="1.00" height="1.40" fill="#a31515" opacity="0.72"/><rect x="8.00" y="20.30" width="6.00" height="1.40" fill="#a31515" opacity="0.72"/><rect x="12.00" y="22.30" width="2.00" height="1.40" fill="#a31515" opacity="0.72"/><rect x="12.00" y="24.30" width="13.00" height="1.40" fill="#a31515" opacity="0.72"/><rect x="26.00" y="24.30" width="1.00" height="1.40" fill="#a31515" opacity="0.72"/><rect x="28.00" y="24.30" width="14.00" height="1.40" fill="#a31515" opacity="0.72"/><rect x="43.00" y="24.30" width="1.00" height="1.40" fill="#a31515" opacity="0.72"/><rect x="45.00" y="24.30" width="3.00" height="1.40" fill="#a31515" opacity="0.72"/><rect x="49.00" y="24.30" width="2.00" height="1.40" fill="#a31515" opacity="0.72"/><rect x="52.00" y="24.30" width="13.00" height="1.40" fill="#a31515" opacity="0.72"/><rect x="8.00" y="26.30" width="4.00" height="1.40" fill="#a31515" opacity="0.72"/><rect x="12.00" y="28.30" width="7.00" height="1.40" fill="#a31515" opacity="0.72"/><rect x="20.00" y="28.30" width="3.00" height="1.40" fill="#a31515" opacity="0.72"/><rect x="0.00" y="30.30" width="1.00" height="1.40" fill="#0431fa" opacity="0.72"/><rect x="0.00" y="32.30" width="5.00" height="1.40" fill="#222" opacity="0.72"/><rect x="5.00" y="32.30" width="1.00" height="1.40" fill="#0431fa" opacity="0.72"/><rect x="6.00" y="32.30" width="1.00" height="1.40" fill="#222" opacity="0.72"/><rect x="7.00" y="32.30" width="18.00" height="1.40" fill="#a31515" opacity="0.72"/><rect x="25.00" y="32.30" width="1.00" height="1.40" fill="#222" opacity="0.72"/><rect x="27.00" y="32.30" width="16.00" height="1.40" fill="#222" opacity="0.72"/><rect x="43.00" y="32.30" width="1.00" height="1.40" fill="#0431fa" opacity="0.72"/><rect x="0.00" y="34.30" width="9.00" height="1.40" fill="#222" opacity="0.72"/><rect x="9.00" y="34.30" width="1.00" height="1.40" fill="#0431fa" opacity="0.72"/><rect x="10.00" y="34.30" width="7.00" height="1.40" fill="#a31515" opacity="0.72"/><rect x="18.00" y="34.30" width="9.00" height="1.40" fill="#a31515" opacity="0.72"/><rect x="27.00" y="34.30" width="1.00" height="1.40" fill="#222" opacity="0.72"/><rect x="29.00" y="34.30" width="23.00" height="1.40" fill="#a31515" opacity="0.72"/><rect x="52.00" y="34.30" width="1.00" height="1.40" fill="#0431fa" opacity="0.72"/></svg>
<div style="position:absolute;left:1418px;top:43px;width:492px;height:873px;background:#fff;box-shadow:-2px 0 4px rgba(0,0,0,0.07);"></div>
<div style="position:absolute;left:1417px;top:43px;width:1px;height:873px;background:#ececec"></div>
<svg style="position:absolute;left:1431.03px;top:71.65px;" width="36.32" height="35.28" viewBox="0 0 36.32 35.28"><g transform="scale(1.0377)"><path d="M5.6 29.3 L15.6 18.9" stroke="#5a4a9a" stroke-width="3" stroke-linecap="round"/><path d="M15.6 18.9 L22.5 12" stroke="#f7935a" stroke-width="1.8" stroke-linecap="round"/><g transform="translate(24.9 9.5) rotate(-22)"><path d="M0 -6 L1.7 -2.3 L5.7 -1.9 L2.7 0.9 L3.5 4.9 L0 2.9 L-3.5 4.9 L-2.7 0.9 L-5.7 -1.9 L-1.7 -2.3 Z" fill="#fdd94a" stroke="#fdd94a" stroke-width="0.9" stroke-linejoin="round"/></g><clipPath id="cp3"><path d="M10 24 L32 2 L40 40 Z"/></clipPath><g clip-path="url(#cp3)"><g transform="translate(24.9 9.5) rotate(-22)"><path d="M0 -6 L1.7 -2.3 L5.7 -1.9 L2.7 0.9 L3.5 4.9 L0 2.9 L-3.5 4.9 L-2.7 0.9 L-5.7 -1.9 L-1.7 -2.3 Z" fill="#fbb040" stroke="#fbb040" stroke-width="0.9" stroke-linejoin="round"/></g></g><path d="M16.9 3.9 Q17.3 5.9 19.3 6.3 Q17.3 6.7 16.9 8.7 Q16.5 6.7 14.5 6.3 Q16.5 5.9 16.9 3.9Z" fill="#fdd94a"/><path d="M13.4 11 Q13.8 13.1 15.9 13.5 Q13.8 13.9 13.4 16 Q13 13.9 10.9 13.5 Q13 13.1 13.4 11Z" fill="#fdd94a"/><path d="M28.6 19.2 Q29 21.1 30.9 21.5 Q29 21.9 28.6 23.8 Q28.2 21.9 26.3 21.5 Q28.2 21.1 28.6 19.2Z" fill="#fbb040"/><circle cx="11.3" cy="8.5" r="0.9" fill="#fde68a"/><circle cx="28.6" cy="16.5" r="0.9" fill="#fbb040"/><circle cx="22.3" cy="20.8" r="0.9" fill="#fcc98a"/></g></svg>
<div style="position:absolute;left:1481.5px;top:68.69px;font:bold 18.2px/24px 'Liberation Sans', sans-serif;color:#1d2631;white-space:pre;">MerlinAI Assistant</div>
<div style="position:absolute;left:1481.5px;top:94.01px;font:normal 11.5px/15px 'Liberation Sans', sans-serif;color:#6b7886;white-space:pre;">Block popup context</div>
<svg style="position:absolute;left:1815px;top:85px;" width="10" height="10" viewBox="0 0 10 10"><path d="M5 0.5V9.5M0.5 5H9.5" stroke="#2d9bd6" stroke-width="1"/></svg>
<div style="position:absolute;left:1835.5px;top:80.79px;font:normal 13.3px/17px 'Liberation Sans', sans-serif;color:#1f9ad6;white-space:pre;">New</div>
<svg style="position:absolute;left:1887px;top:84px;" width="12" height="12" viewBox="0 0 12 12"><path d="M1 1L11 11M11 1L1 11" stroke="#e0262b" stroke-width="1.6"/></svg>
<div style="position:absolute;left:1418px;top:115px;width:492px;height:1px;background:#e3e7eb"></div>
<div style="position:absolute;left:1418px;top:116px;width:480px;height:702px;overflow:hidden">
<div style="position:absolute;left:27px;top:0.82px;font:normal 13.5px/20px 'Liberation Sans', sans-serif;color:#2a323b;white-space:pre">suggestions:</div>
<div style="position:absolute;left:56px;top:34.92px;font:normal 13.5px/20px 'Liberation Sans', sans-serif;color:#2a323b;white-space:pre"><b style="font-weight:bold;color:#1f2831;font-size:12.8px">Avoid Global Variables:</b> Using global variables can make the code</div>
<div style="position:absolute;left:56px;top:55.02px;font:normal 13.5px/20px 'Liberation Sans', sans-serif;color:#2a323b;white-space:pre">harder to maintain and debug. Instead, return the DataFrame from</div>
<div style="position:absolute;left:56px;top:75.12px;font:normal 13.5px/20px 'Liberation Sans', sans-serif;color:#2a323b;white-space:pre">the function or directly work with it in the main code.</div>
<div style="position:absolute;left:56px;top:102.32px;font:normal 13.5px/20px 'Liberation Sans', sans-serif;color:#2a323b;white-space:pre"><b style="font-weight:bold;color:#1f2831;font-size:12.8px">Function to Calculate Profit Margin:</b> Encapsulating the profit</div>
<div style="position:absolute;left:56px;top:122.32px;font:normal 13.5px/20px 'Liberation Sans', sans-serif;color:#2a323b;white-space:pre">margin calculation in a function can improve modularity.</div>
<div style="position:absolute;left:56px;top:148.92px;font:normal 13.5px/20px 'Liberation Sans', sans-serif;color:#2a323b;white-space:pre"><b style="font-weight:bold;color:#1f2831;font-size:12.8px">Improved Naming Conventions:</b> Use more descriptive variable</div>
<div style="position:absolute;left:56px;top:168.32px;font:normal 13.5px/20px 'Liberation Sans', sans-serif;color:#2a323b;white-space:pre">names for better readability.</div>
<div style="position:absolute;left:27px;top:194.52px;font:normal 13.5px/20px 'Liberation Sans', sans-serif;color:#2a323b;white-space:pre">Here’s the optimized version of the code:</div>
<div style="position:absolute;left:27px;top:230px;width:435px;height:351px;box-sizing:border-box;border:1px solid #e3e6ea;border-radius:6px;background:#f8f9fa;overflow:hidden">
<div style="position:absolute;left:0;top:0;width:435px;height:25px;background:#eceef0"></div>
<div style="position:absolute;left:8px;top:5.2px;font:bold 11.2px/12px 'Liberation Sans', sans-serif;color:#5c6873;white-space:pre">PYTHON Code</div>
<svg style="position:absolute;left:403px;top:5px" width="18" height="18" viewBox="0 0 18 18"><g fill="none" stroke="#4a5a68" stroke-width="1.3"><rect x="5.2" y="1.2" width="11" height="11" rx="3.2"/><rect x="1" y="6" width="11.2" height="11.2" rx="3.2" fill="#eceef0"/></g></svg>
<div class="cb" style="left:13.5px;top:46.46px"><div><span class="pk">import</span> pandas <span class="pk">as</span> pd</div><div></div><div><span class="pc"># Assuming sales_records is a pandas DataFrame already loaded</span></div><div><span class="pc"># Example: sales_records = pd.read_csv(&quot;sales_records.csv&quot;)</span></div><div></div><div><span class="pk">def</span> <span class="pf">calculate_profit_margin</span>(df):</div><div>    <span class="ps">&quot;&quot;&quot;Calculate profit margin and return the modified DataFrame.&quot;&quot;&quot;</span></div><div>    df[<span class="ps">&#x27;profit_margin&#x27;</span>] <span class="po">=</span> (df[<span class="ps">&#x27;total_profit&#x27;</span>] <span class="po">/</span> df[<span class="ps">&#x27;total_revenue&#x27;</span>])</div><div>    <span class="pk">return</span> df</div><div></div><div><span class="pc"># Copy data to avoid modifying the original DataFrame</span></div><div>sales_data_with_margin <span class="po">=</span> calculate_profit_margin(sales_records)</div><div></div><div><span class="pc"># Now, sales_data_with_margin contains the profit margin along with the original data</span></div></div>
<div style="position:absolute;left:0;top:327px;width:435px;height:23px;background:#f8f9fa"></div>
<svg style="position:absolute;left:4px;top:332px" width="9" height="10" viewBox="0 0 9 10"><path d="M8 0.5V9.5L0.5 5Z" fill="#8a8a8a"/></svg>
<div style="position:absolute;left:18px;top:332.5px;width:286px;height:8.5px;border-radius:4.5px;background:#8a8a8a"></div>
<svg style="position:absolute;left:421px;top:332px" width="9" height="10" viewBox="0 0 9 10"><path d="M0.5 0.5V9.5L8.5 5Z" fill="#8a8a8a"/></svg>
</div>
<div style="position:absolute;left:27.5px;top:597.12px;font:normal 13.5px/20px 'Liberation Sans', sans-serif;color:#2a323b;white-space:pre">Explanation of Optimizations:</div>
<div style="position:absolute;left:56px;top:627.02px;font:normal 13.5px/20px 'Liberation Sans', sans-serif;color:#2a323b;white-space:pre"><b style="font-weight:bold;color:#1f2831;font-size:12.8px">Function Encapsulation:</b> The profit margin calculation is</div>
<div style="position:absolute;left:56px;top:647.32px;font:normal 13.5px/20px 'Liberation Sans', sans-serif;color:#2a323b;white-space:pre">encapsulated in the <span style="font-family:'Liberation Mono', monospace;font-size:11.5px;background:#f1f2f3;border-radius:4px;padding:3px 6px;color:#1f2831">calculate_profit_margin</span> function, making it</div>
<div style="position:absolute;left:56px;top:667.12px;font:normal 13.5px/20px 'Liberation Sans', sans-serif;color:#2a323b;white-space:pre">reusable and cleaner.</div>
<div style="position:absolute;left:56px;top:693.82px;font:normal 13.5px/20px 'Liberation Sans', sans-serif;color:#2a323b;white-space:pre"><b style="font-weight:bold;color:#1f2831;font-size:12.8px">Descriptive Naming:</b> The variable <span style="font-family:'Liberation Mono', monospace;font-size:11.5px;background:#f1f2f3;border-radius:4px;padding:3px 6px;color:#1f2831">sales_data_with_margin</span></div>
</div>
<div style="position:absolute;left:1898px;top:116px;width:12px;height:700px;background:#f9f9f9"></div>
<svg style="position:absolute;left:1900px;top:120px;" width="10" height="8" viewBox="0 0 10 8"><path d="M1 7.5H10L5.5 1Z" fill="#8a8a8a" stroke="#8a8a8a" stroke-width="0.6" stroke-linejoin="round"/></svg>
<div style="position:absolute;left:1900.5px;top:629px;width:9px;height:130px;background:#878787;border-radius:4.5px"></div>
<svg style="position:absolute;left:1900px;top:807px;" width="10" height="8" viewBox="0 0 10 8"><path d="M0.8 0.5H9.2L5 7.2Z" fill="#8a8a8a"/></svg>
<div style="position:absolute;left:1425px;top:826px;width:481px;height:85px;box-sizing:border-box;border:1px solid #b7c1ca;border-radius:6px;background:#fff"></div>
<div style="position:absolute;left:1438px;top:832.18px;font:normal 11.6px/15px 'Liberation Sans', sans-serif;color:#a9b0b7;white-space:pre;">Ask Assistant or type &#x27;/&#x27; for commands</div>
<svg style="position:absolute;left:1875px;top:884px;" width="15" height="13" viewBox="0 0 15 13"><path d="M1 1L14 6.5L1 12L2.8 6.5Z" fill="#d5dadf"/><path d="M2.8 6.5H8" stroke="#fff" stroke-width="0.8"/></svg>
</body></html>
